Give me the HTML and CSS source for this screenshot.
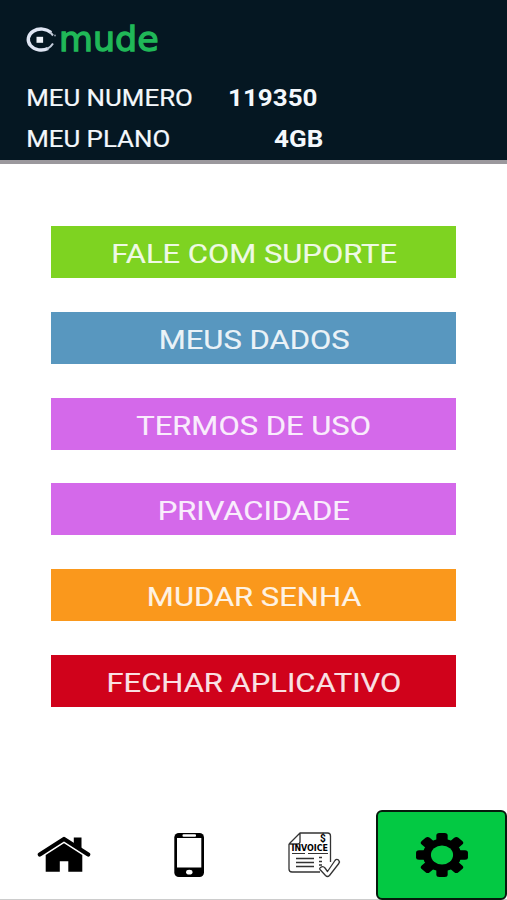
FILE: index.html
```html
<!DOCTYPE html>
<html lang="pt-BR">
<head>
<meta charset="utf-8">
<title>Mude</title>
<link rel="stylesheet" href="styles.css">
</head>
<body>
<div class="app">
  <header class="header">
    <div class="logo">
      <svg class="logo-mark" width="32" height="28" viewBox="0 0 32 28">
        <path d="M26 6.600A13 10.500 0 1 0 23 22.500" fill="none" stroke="#dfe5f3" stroke-width="3.400"/>
        <path d="M25 6l3 3.500M22 23q4-2 6-5.500" fill="none" stroke="#c3cbd9" stroke-width="2"/>
        <rect x="11.500" y="10.800" width="6.600" height="6" fill="#eef2f8"/>
        <circle cx="30" cy="9.500" r="1" fill="#8791a0"/>
      </svg>
      <span class="logo-name">mude</span>
    </div>
    <div class="row"><span class="label label-number">MEU NUMERO</span><b class="value value-number">119350</b></div>
    <div class="row"><span class="label label-plan">MEU PLANO</span><b class="value value-plan">4GB</b></div>
  </header>
  <main class="menu">
    <button class="item green"><span>FALE COM SUPORTE</span></button>
    <button class="item blue"><span>MEUS DADOS</span></button>
    <button class="item purple"><span>TERMOS DE USO</span></button>
    <button class="item purple"><span>PRIVACIDADE</span></button>
    <button class="item orange"><span>MUDAR SENHA</span></button>
    <button class="item red"><span>FECHAR APLICATIVO</span></button>
  </main>
  <nav class="nav">
    <a class="tab home">
      <svg width="54" height="40" viewBox="0 0 54 40">
        <path d="M2.800 18.500L27 3l24.200 15.500" fill="none" stroke="#000" stroke-width="4.200" stroke-linecap="round" stroke-linejoin="round"/>
        <path d="M36.800 1.500h7.700v13l-7.700-4.800zM8.700 19L27 7.200 45.300 19v16.800h-14V25.300h-8.500v10.500H8.700z"/>
      </svg>
    </a>
    <a class="tab">
      <svg width="32" height="46" viewBox="0 0 32 46">
        <rect x="1.300" y="1" width="29.700" height="44" rx="4.500"/>
        <rect x="4" y="6" width="24.300" height="29.500" fill="#fff"/>
        <rect x="9.500" y="2.200" width="13.500" height="2.500" rx="1" fill="#fff"/>
        <ellipse cx="16.300" cy="40.200" rx="3.200" ry="2.400" fill="#fff"/>
      </svg>
    </a>
    <a class="tab">
      <svg width="54" height="48" viewBox="0 0 54 48">
        <g fill="none" stroke="#333" stroke-width="1.300" stroke-linejoin="round">
          <path d="M2 13L13 2h27.500q3 0 3 3v26M2 13v25q0 3 3 3h28M2 13h8.500q2.500 0 2.500-2.500V2"/>
          <path d="M33.500 36.500q2.500-2 4.500.5l2.500 3.500 7.500-11q1.500-2 3.500-.5 1.500 1.500.3 3.500L42.500 44.500q-2 2-4 0l-5.500-6q-.8-1 .5-2z" fill="#fff"/>
          <path d="M5 22.500h13M21 22.500h20" stroke-width="1"/>
          <path d="M9 27.500h18M9 31.500h18M9 35.500h18" stroke-width="1.300"/>
          <path d="M32 26.500h3M32 30.500h3M32 34h3" stroke-width="1.300"/>
        </g>
        <text class="invoice-word" x="4.500" y="20" textLength="36.500" lengthAdjust="spacing">INVOICE</text>
        <text class="invoice-sign" x="33" y="11">$</text>
      </svg>
    </a>
    <a class="tab active">
      <svg width="54" height="46" viewBox="-27 -23 54 46">
        <g transform="scale(1.18 1)">
          <circle r="16.300"/>
          <rect x="-4.800" y="-22" width="9.600" height="44" rx="2.500"/>
          <rect x="-22" y="-4.800" width="44" height="9.600" rx="2.500"/>
          <g transform="rotate(45)">
            <rect x="-4.800" y="-22" width="9.600" height="44" rx="2.500"/>
            <rect x="-22" y="-4.800" width="44" height="9.600" rx="2.500"/>
          </g>
          <circle r="9.400" fill="#03c943"/>
        </g>
      </svg>
    </a>
  </nav>
</div>
</body>
</html>
```

FILE: styles.css
```css
* { box-sizing: border-box; }
body { margin: 0; background: #fff; font-family: Roboto, sans-serif; }
.app { width: 507px; height: 900px; display: flex; flex-direction: column; overflow: hidden; }

.header {
  height: 164px;
  flex: none;
  padding: 20px 25px 0;
  background: #051722;
  border-bottom: 4px solid #9b989d;
  color: #f4f8fc;
}
.logo { display: flex; align-items: center; height: 38px; margin-bottom: 20px; }
.logo-mark { display: block; margin-top: 1px; }
.logo-name {
  margin-left: 2px;
  font: 34.500px/38px "DejaVu Sans", sans-serif;
  color: #20b858;
  -webkit-text-stroke: 1.3px #20b858;
  transform: scaleX(1.01);
  transform-origin: left;
}
.row { display: flex; height: 41px; line-height: 41px; font-size: 23px; white-space: nowrap; }
.label { width: 203px; padding-left: 1px; transform-origin: left; transform: scaleX(1.125); -webkit-text-stroke: .2px; }
.value { transform-origin: left; transform: scaleX(1.13); }
.label-plan { width: 249px; }

.menu { flex: none; padding: 62px 51px 0; display: grid; row-gap: 33.750px; }
.item {
  height: 52px;
  border: 0;
  padding: 3px 0 0 1px;
  color: #fff;
  font: 26px/50px Roboto, sans-serif;
}
.item span {
  display: inline-block;
  transform: scaleX(1.19);
  color: rgba(255, 255, 255, .88);
  -webkit-text-stroke: .2px;
  white-space: nowrap;
}
.green { background: #7ed321; }
.blue { background: #5897bf; }
.purple { background: #d469ea; }
.orange { background: #fa981c; }
.red { background: #d0021b; }

.nav {
  margin-top: auto;
  height: 90px;
  display: grid;
  grid-template-columns: 126px 125px 125px 131px;
  border-bottom: 1px solid #ccc;
}
.tab { display: flex; align-items: center; justify-content: center; }
.tab svg { display: block; }
.home { padding: 2px 0 0 2px; }
.active { height: 90px; background: #03c943; border: 2px solid #061a0c; border-radius: 6px; }
.invoice-word { font: bold 8px "DejaVu Sans", sans-serif; }
.invoice-sign { font: bold 10px Roboto, sans-serif; }
```
